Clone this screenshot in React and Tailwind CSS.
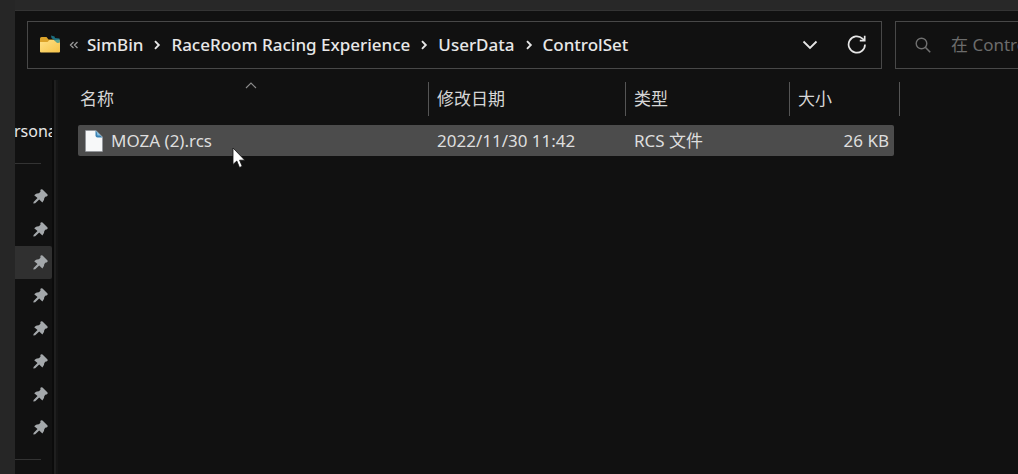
import React from "react";

const CRUMBS = ["SimBin", "RaceRoom Racing Experience", "UserData", "ControlSet"];

const PINS = [
  { name: "桌面" },
  { name: "下载" },
  { name: "文档", active: true },
  { name: "图片" },
  { name: "音乐" },
  { name: "视频" },
  { name: "UserData" },
  { name: "ControlSet" },
];

const FILES = [
  { name: "MOZA (2).rcs", date: "2022/11/30 11:42", type: "RCS 文件", size: "26 KB" },
];

function FolderIcon() {
  return (
    <svg width="22" height="20" viewBox="0 0 22 20" className="shrink-0" aria-hidden="true">
      <defs>
        <linearGradient id="folder" x1="0" y1="0" x2="1" y2="1">
          <stop offset="0" stopColor="#ffe084" />
          <stop offset="1" stopColor="#f6c44a" />
        </linearGradient>
      </defs>
      <path d="M1 3.500Q1 2 2.500 2H7.500L9.500 4.500H20Q21 4.500 21 6V12H1Z" fill="#dca32a" />
      <path d="M1 7H8.500L10.500 5H20Q21 5 21 6V16.500Q21 17.500 20 17.500H2Q1 17.500 1 16.500Z" fill="url(#folder)" />
      <path d="M12 .5L15.500 1.500L16 3L20.500 3.500V7.500L17.500 7L12.500 3Z" fill="#1d6f80" />
      <path d="M15.500 5L20.500 4.500V7.500L18 8Z" fill="#5ba392" />
    </svg>
  );
}

function FileIcon() {
  return (
    <svg width="18" height="22" viewBox="0 0 18 22" className="shrink-0" aria-hidden="true">
      <path d="M.5 .5H11L17.500 7V21.500H.5Z" fill="#f7f8f9" stroke="#8d9297" strokeWidth=".6" />
      <path d="M10.500 .5L17.500 7.500H12.500Q10.500 7.500 10.500 5.500Z" fill="#3a82b4" />
      <path d="M11.500 1.500L15.500 5.500L12.500 5.500Z" fill="#8cc4e4" />
    </svg>
  );
}

function PinIcon() {
  return (
    <svg width="15" height="15" viewBox="0 0 15 15" aria-hidden="true">
      <path
        d="M7.800 .6Q8.600 -.2 9.500 .6L14.300 5.200Q15.100 6.100 14.300 7Q13.700 7.500 12.700 7.500L11.300 9Q11.400 11.500 9.400 13.500L6.200 10.600L2.200 14.300L.3 14.600L.6 12.900L4.500 9.100L1.200 6.200Q3.200 4 6 4.300L7.600 2.600Q7 1.400 7.800 .6Z"
        fill="#a4a8ab"
      />
    </svg>
  );
}

function Chevron() {
  return (
    <svg width="8" height="10" viewBox="0 0 8 10" className="shrink-0" aria-hidden="true">
      <path d="M2 1.200L5.800 5L2 8.800" fill="none" stroke="#e6e6e6" strokeWidth="1.900" />
    </svg>
  );
}

function AddressBar() {
  return (
    <nav
      aria-label="地址"
      className="flex h-12 min-w-0 flex-1 items-center border border-[#484848] pl-[11px] pr-[14px]"
    >
      <FolderIcon />
      <button aria-label="上级文件夹" className="mx-2 shrink-0">
        <svg width="10" height="8" viewBox="0 0 10 8">
          <path d="M4.500 1L1.500 4L4.500 7M8.500 1L5.500 4L8.500 7" fill="none" stroke="#9a9a9a" strokeWidth="1.300" />
        </svg>
      </button>
      <ol className="flex min-w-0 flex-1 items-center text-[17px] font-medium text-[#e8e8e8]">
        {CRUMBS.map((c, i) => (
          <li key={c} className="flex items-center">
            {i > 0 && (
              <span className="mx-[10px]">
                <Chevron />
              </span>
            )}
            <button className="whitespace-nowrap">{c}</button>
          </li>
        ))}
      </ol>
      <button aria-label="以前的位置" className="mr-[29px] shrink-0">
        <svg width="16" height="10" viewBox="0 0 16 10">
          <path d="M1.500 1.500L8 8L14.500 1.500" fill="none" stroke="#e6e6e6" strokeWidth="1.800" />
        </svg>
      </button>
      <button aria-label="刷新" className="shrink-0">
        <svg width="20" height="20" viewBox="0 0 20 20">
          <path d="M18 9.500A8.200 8.200 0 1 1 15.500 3.600L17 5" fill="none" stroke="#e6e6e6" strokeWidth="1.700" />
          <path d="M17.700 .8V5.700H12.800" fill="none" stroke="#e6e6e6" strokeWidth="1.700" />
        </svg>
      </button>
    </nav>
  );
}

function SearchBox() {
  return (
    <label className="flex h-12 w-[123px] shrink-0 items-center overflow-hidden border border-r-0 border-[#484848] pl-[19px]">
      <svg width="16" height="16" viewBox="0 0 16 16" className="shrink-0" aria-hidden="true">
        <circle cx="6.500" cy="6.500" r="5.300" fill="none" stroke="#707070" strokeWidth="1.400" />
        <path d="M10.300 10.300L15.200 15.200" stroke="#707070" strokeWidth="1.600" />
      </svg>
      <input
        type="text"
        aria-label="搜索"
        placeholder="在 ControlSet 中搜索"
        className="ml-5 w-full min-w-0 bg-transparent text-[17px] text-white outline-none placeholder:text-[#6c6c6c]"
      />
    </label>
  );
}

function Sidebar() {
  return (
    <aside className="w-[37px] shrink-0 overflow-hidden">
      <a href="#personal" className="mt-[39px] block h-6 text-base leading-6 text-[#e8e8e8]">
        <span className="-ml-px">rsona</span>
      </a>
      <hr className="mt-5 w-[26px] border-[#333333]" />
      <ul className="mt-4">
        {PINS.map((p) => (
          <li key={p.name}>
            <a
              href="#pin"
              aria-label={p.name}
              className={[
                "flex h-[33px] items-center justify-end rounded-r-xs pr-1",
                p.active ? "bg-[#303030]" : "",
              ].join(" ")}
            >
              <PinIcon />
            </a>
          </li>
        ))}
      </ul>
      <hr className="mt-[15px] w-[26px] border-[#333333]" />
    </aside>
  );
}

function HeaderCell({ children, sorted, colSpan }) {
  return (
    <th className="p-0 pb-[9px] font-normal" colSpan={colSpan} aria-sort={sorted ? "ascending" : undefined}>
      <button
        className={[
          "relative flex h-[34px] w-full items-center border-r border-[#555555] text-left text-[17px] text-[#d6d6d6]",
          sorted ? "pl-[2px]" : "pl-2",
        ].join(" ")}
      >
        {children}
        {sorted && (
          <svg width="12" height="7" viewBox="0 0 12 7" className="absolute left-0 right-1 top-0 mx-auto">
            <path d="M1 6L6 1L11 6" fill="none" stroke="#8c8c8c" strokeWidth="1.100" />
          </svg>
        )}
      </button>
    </th>
  );
}

function FileTable() {
  return (
    <table className="w-[822px] table-fixed border-separate border-spacing-0">
      <colgroup>
        <col className="w-[351px]" />
        <col className="w-[197px]" />
        <col className="w-[164px]" />
        <col />
        <col className="w-[6px]" />
      </colgroup>
      <thead>
        <tr>
          <HeaderCell sorted>名称</HeaderCell>
          <HeaderCell>修改日期</HeaderCell>
          <HeaderCell>类型</HeaderCell>
          <HeaderCell colSpan={2}>大小</HeaderCell>
        </tr>
      </thead>
      <tbody className="text-[17px] text-[#dedede]">
        {FILES.map((f) => (
          <tr key={f.name} className="h-[31px] leading-6">
            <td className="rounded-l-xs bg-[#4c4c4c] p-0 pl-[7px]">
              <div className="relative flex items-center gap-2">
                <FileIcon />
                {f.name}
                <svg width="14" height="22" viewBox="0 0 14 22" className="absolute left-[147px] top-[18px]" aria-hidden="true">
                  <path d="M1 1V17.500L4.800 14L7.500 20.500L10.200 19.300L7.600 13.200H12.800Z" fill="#fff" stroke="#111" strokeWidth=".8" />
                </svg>
              </div>
            </td>
            <td className="bg-[#4c4c4c] p-0 pl-2">{f.date}</td>
            <td className="bg-[#4c4c4c] p-0 pl-2">{f.type}</td>
            <td className="rounded-r-xs bg-[#4c4c4c] p-0 pr-[5px] text-right">{f.size}</td>
            <td className="p-0" />
          </tr>
        ))}
      </tbody>
    </table>
  );
}

export default function App() {
  return (
    <div className="flex min-h-screen overflow-hidden bg-[#111111] font-['Noto_Sans','Noto_Sans_CJK_SC',sans-serif]">
      <div className="w-[15px] shrink-0 bg-[#262626]" />
      <div className="flex min-w-0 flex-1 flex-col">
        <div className="h-[11px] border-b border-[#343434] bg-[#282828]" />
        <header className="mt-[10px] flex gap-[13px] pl-3">
          <AddressBar />
          <SearchBox />
        </header>
        <div className="flex flex-1 pt-[11px]">
          <Sidebar />
          <div className="w-[6px] shrink-0 border-x-2 border-l-[#0b0b0b] border-r-[#151515] bg-[#1f1f1f]" />
          <main className="min-w-0 flex-1 pl-5 pt-[2px]">
            <FileTable />
          </main>
        </div>
      </div>
    </div>
  );
}
